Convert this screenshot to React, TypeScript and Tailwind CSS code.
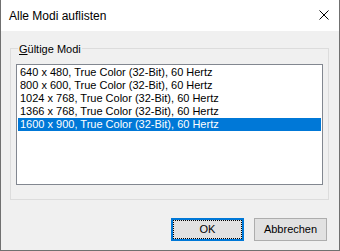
import React from "react";

const modes = [
  "640 x 480, True Color (32-Bit), 60 Hertz",
  "800 x 600, True Color (32-Bit), 60 Hertz",
  "1024 x 768, True Color (32-Bit), 60 Hertz",
  "1366 x 768, True Color (32-Bit), 60 Hertz",
  "1600 x 900, True Color (32-Bit), 60 Hertz",
];

const selected = 4;

export default function App() {
  return (
    <div className="w-[340px] h-[251px] flex flex-col bg-[#f0f0f0] border-x border-b border-[#707070] font-['Liberation_Sans',Arial,sans-serif] text-black overflow-hidden">
      {/* Title bar */}
      <div className="h-[31px] shrink-0 bg-white flex items-center justify-between pl-[8px] pr-[10px]">
        <span className="text-[12px] leading-none">Alle Modi auflisten</span>
        <svg width="10" height="10" viewBox="0 0 10 10" className="mt-[-1px]">
          <path d="M0.5 0.5 L9.5 9.5 M9.5 0.5 L0.5 9.5" stroke="#000" strokeWidth="1" />
        </svg>
      </div>

      {/* Body */}
      <div className="flex-1 flex flex-col pl-[9px] pr-[10px] pt-[17px]">
        {/* Group box */}
        <div className="relative h-[152px] border border-[#dcdcdc] pt-[15px] px-[5px]">
          <span className="absolute left-[7px] top-[-6px] bg-[#f0f0f0] px-[1px] text-[11px] leading-[12px]">
            <span className="underline underline-offset-1">G</span>ültige Modi
          </span>
          <div className="h-[121px] bg-white border border-[#828790] p-[1px] pt-[1px]">
            {modes.map((m, i) => (
              <div
                key={m}
                className={
                  i === selected
                    ? "h-[13px] pl-[2px] text-[11px] leading-[13px] whitespace-nowrap bg-[#0078d7] text-white"
                    : "h-[13px] pl-[2px] text-[11px] leading-[13px] whitespace-nowrap"
                }
              >
                {m}
              </div>
            ))}
          </div>
        </div>

        {/* Buttons */}
        <div className="flex justify-end gap-[10px] mt-[18px] pr-[2px]">
          <button className="w-[73px] h-[23px] bg-[#e1e1e1] border-2 border-[#0078d7] p-0 flex">
            <span className="flex-1 flex items-center justify-center border border-dotted border-black text-[11px] leading-none">
              OK
            </span>
          </button>
          <button className="w-[73px] h-[23px] bg-[#e1e1e1] border border-[#adadad] flex items-center justify-center text-[11px] leading-none">
            Abbrechen
          </button>
        </div>
      </div>
    </div>
  );
}
